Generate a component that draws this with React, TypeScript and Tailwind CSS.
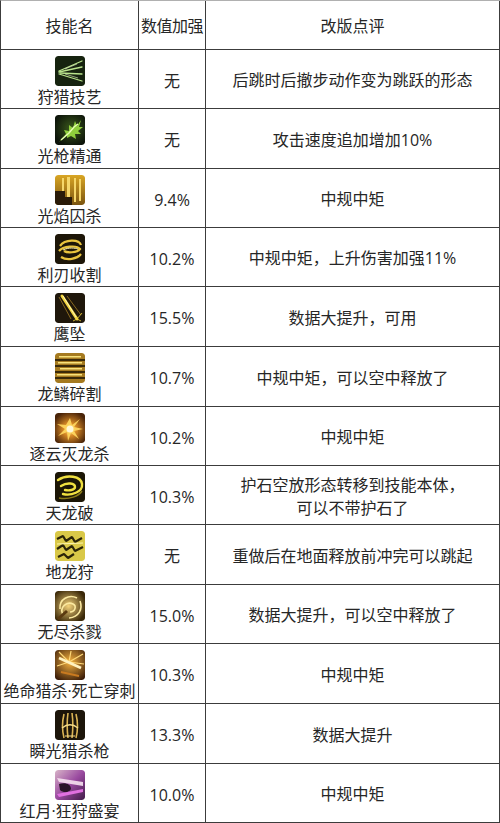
import React from "react";

type Row = { name: string; icon: number; value: string; note: string[]; h: string };

const rows: Row[] = [
  { name: "狩猎技艺", icon: 1, value: "无", note: ["后跳时后撤步动作变为跳跃的形态"], h: "h-[59px]" },
  { name: "光枪精通", icon: 2, value: "无", note: ["攻击速度追加增加10%"], h: "h-[60px]" },
  { name: "光焰囚杀", icon: 3, value: "9.4%", note: ["中规中矩"], h: "h-[59px]" },
  { name: "利刃收割", icon: 4, value: "10.2%", note: ["中规中矩，上升伤害加强11%"], h: "h-[59px]" },
  { name: "鹰坠", icon: 5, value: "15.5%", note: ["数据大提升，可用"], h: "h-[60px]" },
  { name: "龙鳞碎割", icon: 6, value: "10.7%", note: ["中规中矩，可以空中释放了"], h: "h-[60px]" },
  { name: "逐云灭龙杀", icon: 7, value: "10.2%", note: ["中规中矩"], h: "h-[59px]" },
  { name: "天龙破", icon: 8, value: "10.3%", note: ["护石空放形态转移到技能本体，", "可以不带护石了"], h: "h-[59px]" },
  { name: "地龙狩", icon: 9, value: "无", note: ["重做后在地面释放前冲完可以跳起"], h: "h-[60px]" },
  { name: "无尽杀戮", icon: 10, value: "15.0%", note: ["数据大提升，可以空中释放了"], h: "h-[59px]" },
  { name: "绝命猎杀·死亡穿刺", icon: 11, value: "10.3%", note: ["中规中矩"], h: "h-[60px]" },
  { name: "瞬光猎杀枪", icon: 12, value: "13.3%", note: ["数据大提升"], h: "h-[60px]" },
  { name: "红月·狂狩盛宴", icon: 13, value: "10.0%", note: ["中规中矩"], h: "h-[59px]" },
];

function SkillIcon({ kind }: { kind: number }) {
  const id = `g${kind}`;
  let body: React.ReactNode = null;
  switch (kind) {
    case 1:
      body = (
        <>
          <rect width="30" height="30" fill="#16230f" />
          <g stroke="#b9e38c" strokeWidth="1.3" strokeLinecap="round">
            <path d="M4 15 L27 5" />
            <path d="M4 16 L27 11" />
            <path d="M5 17 L27 18" />
            <path d="M4 18 L27 25" />
          </g>
          <g stroke="#e8f8c8" strokeWidth="0.6">
            <path d="M10 13 L22 8" />
            <path d="M10 18 L23 22" />
          </g>
        </>
      );
      break;
    case 2:
      body = (
        <>
          <defs>
            <radialGradient id={id} cx="0.55" cy="0.45" r="0.6">
              <stop offset="0" stopColor="#3b5a1c" />
              <stop offset="1" stopColor="#0d140a" />
            </radialGradient>
          </defs>
          <rect width="30" height="30" fill={`url(#${id})`} />
          <path d="M4 27 L11 19 L9 15 L14 16 L14 10 L18 13 L20 6 L22 11 L26 5 L24 12 L28 12 L23 16 L26 19 L20 19 L21 24 L16 21 L12 23 L12 20 Z" fill="#8fcf3c" />
          <path d="M6 25 L14 18 L19 12 L23 9" stroke="#e6ffb0" strokeWidth="1.5" fill="none" />
        </>
      );
      break;
    case 3:
      body = (
        <>
          <defs>
            <linearGradient id={id} x1="0" y1="0" x2="0" y2="1">
              <stop offset="0" stopColor="#d9a624" />
              <stop offset="1" stopColor="#7a5410" />
            </linearGradient>
          </defs>
          <rect width="30" height="30" fill={`url(#${id})`} />
          <g fill="#f6d76a">
            <rect x="7" y="3" width="2" height="24" />
            <rect x="12" y="2" width="3" height="25" />
            <rect x="19" y="3" width="2" height="24" />
            <rect x="24" y="4" width="2" height="22" />
          </g>
          <path d="M0 16 L10 16 L10 22 L17 22 L17 30 L0 30 Z" fill="#2a1b08" />
        </>
      );
      break;
    case 4:
      body = (
        <>
          <rect width="30" height="30" fill="#1d1608" />
          <g fill="none" stroke="#e9c43e" strokeWidth="2.2">
            <path d="M5 12 C10 5 24 5 26 11" />
            <path d="M4 17 C8 12 22 11 25 15 C22 19 12 19 9 17" />
            <path d="M6 23 C12 27 22 25 26 20" />
          </g>
          <path d="M8 16 C14 13 20 14 23 15" stroke="#fff3b0" strokeWidth="1" fill="none" />
        </>
      );
      break;
    case 5:
      body = (
        <>
          <rect width="30" height="30" fill="#1f170b" />
          <g stroke="#8a6a20" strokeWidth="1">
            <path d="M4 4 L16 26" />
            <path d="M12 3 L26 22" />
          </g>
          <path d="M7 3 L22 26" stroke="#f2d540" strokeWidth="3" strokeLinecap="round" />
          <path d="M8 3 L21 24" stroke="#fff6b8" strokeWidth="1" />
          <g stroke="#f2d540" strokeWidth="0.8">
            <path d="M22 26 L27 20" />
            <path d="M22 26 L26 28" />
            <path d="M22 26 L18 28" />
          </g>
        </>
      );
      break;
    case 6:
      body = (
        <>
          <rect width="30" height="30" fill="#a57a20" />
          <g fill="#3b2a09">
            <rect x="0" y="6" width="30" height="2" />
            <rect x="0" y="12" width="30" height="2" />
            <rect x="0" y="18" width="30" height="2" />
            <rect x="0" y="24" width="30" height="2" />
          </g>
          <g fill="#f9e27a">
            <rect x="3" y="9" width="24" height="1.5" />
            <rect x="5" y="15" width="22" height="1.5" />
            <rect x="2" y="21" width="25" height="1.5" />
            <rect x="4" y="3" width="22" height="1.5" />
          </g>
        </>
      );
      break;
    case 7:
      body = (
        <>
          <defs>
            <radialGradient id={id} cx="0.5" cy="0.55" r="0.6">
              <stop offset="0" stopColor="#ffeaa0" />
              <stop offset="0.35" stopColor="#d98a26" />
              <stop offset="1" stopColor="#4a2408" />
            </radialGradient>
          </defs>
          <rect width="30" height="30" fill={`url(#${id})`} />
          <path d="M15 5 L17 12 L25 6 L19 14 L28 16 L19 18 L24 26 L16 20 L13 28 L12 19 L3 23 L10 16 L2 11 L11 12 Z" fill="#ffd860" opacity="0.9" />
          <circle cx="15" cy="16" r="3.5" fill="#fff8d8" />
        </>
      );
      break;
    case 8:
      body = (
        <>
          <rect width="30" height="30" fill="#1c1606" />
          <g fill="none" stroke="#f0e040" strokeWidth="2.4" strokeLinecap="round">
            <path d="M3 8 C12 2 26 4 27 12 C28 20 16 24 8 22" />
            <path d="M6 14 C12 10 20 11 20 15 C20 18 14 19 10 18" />
          </g>
          <path d="M4 26 C14 28 24 24 27 19" stroke="#8a7a18" strokeWidth="1.5" fill="none" />
        </>
      );
      break;
    case 9:
      body = (
        <>
          <rect width="30" height="30" fill="#d9c848" />
          <g fill="none" stroke="#2a2408" strokeWidth="2.2" strokeLinejoin="bevel">
            <path d="M2 8 L8 5 L11 10 L17 6 L20 11 L27 7" />
            <path d="M2 18 L8 14 L11 19 L17 15 L20 20 L28 16" />
            <path d="M3 26 L9 23 L13 27 L19 23" />
          </g>
          <path d="M2 13 L28 12" stroke="#fff7b0" strokeWidth="1" />
        </>
      );
      break;
    case 10:
      body = (
        <>
          <defs>
            <radialGradient id={id} cx="0.45" cy="0.5" r="0.6">
              <stop offset="0" stopColor="#f4d27a" />
              <stop offset="1" stopColor="#3a2808" />
            </radialGradient>
          </defs>
          <rect width="30" height="30" fill={`url(#${id})`} />
          <g fill="none" stroke="#fbe9a0" strokeWidth="1.6">
            <path d="M5 18 C4 8 14 3 22 7" />
            <path d="M8 24 C4 16 12 10 18 13 C22 15 20 21 15 21" />
            <path d="M25 10 C28 18 24 26 14 27" />
          </g>
          <path d="M3 28 L12 20" stroke="#5a3a10" strokeWidth="3" />
        </>
      );
      break;
    case 11:
      body = (
        <>
          <defs>
            <radialGradient id={id} cx="0.5" cy="0.4" r="0.7">
              <stop offset="0" stopColor="#f7b340" />
              <stop offset="1" stopColor="#3a1c08" />
            </radialGradient>
          </defs>
          <rect width="30" height="30" fill={`url(#${id})`} />
          <g stroke="#ffd978" strokeWidth="1.2">
            <path d="M14 12 L4 2" />
            <path d="M14 12 L16 1" />
            <path d="M14 12 L28 4" />
            <path d="M14 12 L29 14" />
            <path d="M14 12 L2 16" />
          </g>
          <path d="M4 8 L26 18" stroke="#fff2c0" strokeWidth="2.5" />
          <path d="M6 22 L24 26" stroke="#c97a20" strokeWidth="2" />
        </>
      );
      break;
    case 12:
      body = (
        <>
          <rect width="30" height="30" fill="#1c150a" />
          <g fill="none" stroke="#dbb454" strokeWidth="1.6">
            <path d="M9 28 C7 20 7 12 9 4" />
            <path d="M13 28 C12 20 12 10 13 3" />
            <path d="M17 28 C18 20 18 10 17 3" />
            <path d="M21 28 C23 20 23 12 21 4" />
          </g>
          <path d="M7 18 C12 14 18 14 23 18" stroke="#f5dc8a" strokeWidth="1.4" fill="none" />
          <path d="M10 26 L20 26" stroke="#f5dc8a" strokeWidth="1.2" />
        </>
      );
      break;
    case 13:
      body = (
        <>
          <defs>
            <linearGradient id={id} x1="0" y1="0" x2="1" y2="1">
              <stop offset="0" stopColor="#d8b4c8" />
              <stop offset="0.5" stopColor="#9a4aa0" />
              <stop offset="1" stopColor="#401c48" />
            </linearGradient>
          </defs>
          <rect width="30" height="30" fill={`url(#${id})`} />
          <path d="M2 8 L28 12 L28 16 L4 12 Z" fill="#f6e2f0" opacity="0.9" />
          <path d="M4 14 C10 12 16 14 16 19 C14 23 8 23 5 20 Z" fill="#2a1428" />
          <path d="M2 24 L28 19 L28 22 L4 27 Z" fill="#e070e0" />
        </>
      );
      break;
  }
  return (
    <svg width="30" height="30" viewBox="0 0 30 30" className="block rounded-[3px] shrink-0">
      <clipPath id={`c${kind}`}>
        <rect width="30" height="30" rx="3" />
      </clipPath>
      <g clipPath={`url(#c${kind})`}>{body}</g>
    </svg>
  );
}

export default function App() {
  return (
    <div
      className="w-[500px] bg-white text-[#262626] text-[16px]"
      style={{ fontFamily: '"Open Sans", "Noto Sans CJK SC", sans-serif' }}
    >
      <div className="border-l border-t border-l-[#3c3c3c] border-t-[#b0b0b0]">
        <div className="grid grid-cols-[138px_67px_294px] h-[49px] border-b border-[#3c3c3c]">
          <div className="border-r border-[#3c3c3c] flex items-center justify-center pt-[2px]">技能名</div>
          <div className="border-r border-[#3c3c3c] flex items-center justify-center pt-[2px] whitespace-nowrap tracking-[-0.5px]">
            数值加强
          </div>
          <div className="border-r border-[#3c3c3c] flex items-center justify-center pt-[2px]">改版点评</div>
        </div>
        {rows.map((r) => (
          <div key={r.name} className={`grid grid-cols-[138px_67px_294px] border-b border-[#3c3c3c] ${r.h}`}>
            <div className="border-r border-[#3c3c3c] flex flex-col items-center pt-[6px] gap-[2px]">
              <SkillIcon kind={r.icon} />
              <div className="leading-[18px] whitespace-nowrap">{r.name}</div>
            </div>
            <div className="border-r border-[#3c3c3c] flex items-center justify-center pt-[3px]">{r.value}</div>
            <div className="border-r border-[#3c3c3c] flex flex-col items-center justify-center pt-[3px] leading-[23px]">
              {r.note.map((n) => (
                <div key={n}>{n}</div>
              ))}
            </div>
          </div>
        ))}
      </div>
    </div>
  );
}
